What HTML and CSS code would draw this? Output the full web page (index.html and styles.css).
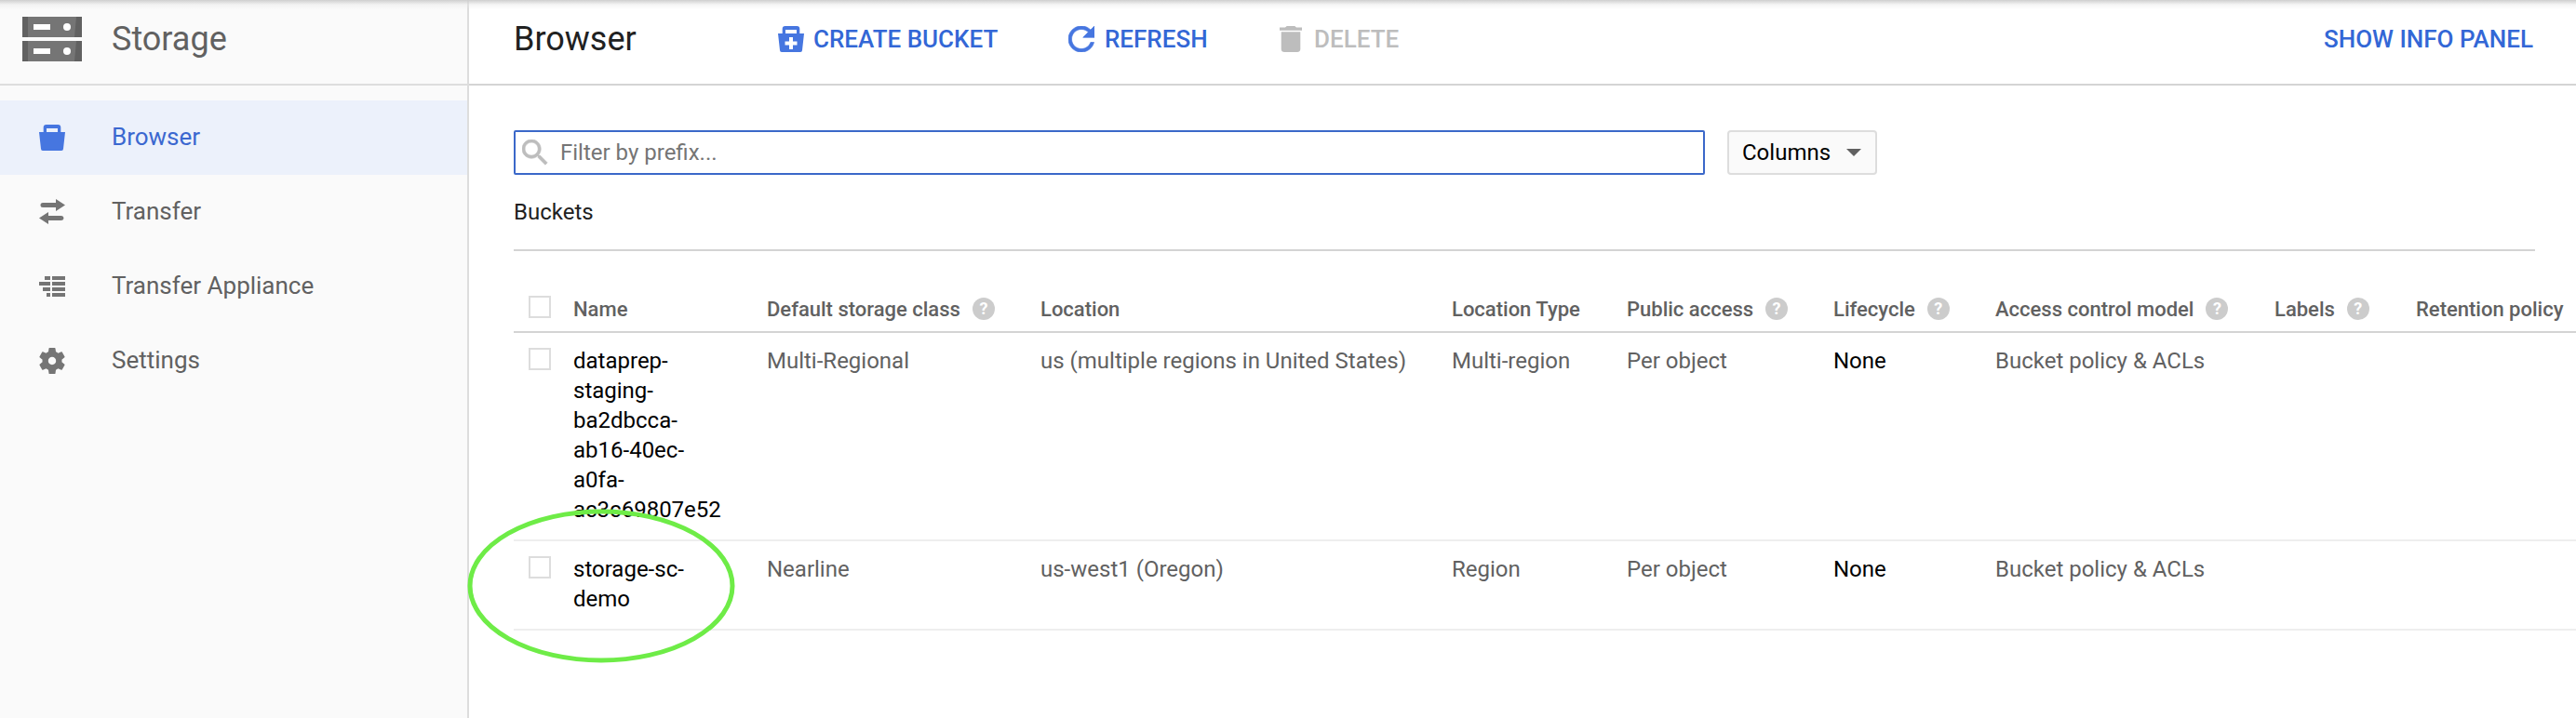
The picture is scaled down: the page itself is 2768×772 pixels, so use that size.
FILE: index.html
```html
<!DOCTYPE html>
<html lang="en">
<head>
<meta charset="utf-8">
<title>Storage Browser</title>
<link rel="stylesheet" href="styles.css">
</head>
<body>
<div class="app">
  <aside class="sidebar">
    <div class="brand">
      <svg class="brand-icon" viewBox="0 0 64 48" width="64" height="48">
        <path class="srv" d="M0 0h64v22H0zM0 26h64v22H0z"/>
        <path class="srv-light" d="M6 0h52l-2 22H6zM6 26h52l-2 22H6z"/>
        <path class="srv-hole" d="M12 8h18v6H12zM12 34h18v6H12z"/>
        <circle class="srv-hole" cx="48" cy="11" r="4"/>
        <circle class="srv-hole" cx="48" cy="37" r="4"/>
      </svg>
      <span class="brand-name">Storage</span>
    </div>
    <nav class="nav">
      <a class="nav-item active">
        <svg class="nav-icon" viewBox="0 0 28 28" width="28" height="28"><path fill-rule="evenodd" d="M4.7 8V3a3 3 0 0 1 3-3h12.6a3 3 0 0 1 3 3v5H28l-2 18a2 2 0 0 1-2 2H4a2 2 0 0 1-2-2L0 8zM8 4v4h12V4z"/></svg>
        <span class="nav-label">Browser</span>
      </a>
      <a class="nav-item">
        <svg class="nav-icon" viewBox="0 0 28 28" width="28" height="28"><path d="M4 4h14V0l10 6.500L18 13V9H4a2.500 2.500 0 0 1 0-5zM24 23H10v4L0 20.500 10 14v4h14a2.500 2.500 0 0 1 0 5z"/></svg>
        <span class="nav-label">Transfer</span>
      </a>
      <a class="nav-item">
        <svg class="nav-icon" viewBox="0 0 28 28" width="28" height="28"><path d="M6 3h6v4H6zM14 3h14v4H14zM0 9h12v4H0zM14 9h14v4H14zM4 15h8v4H4zM14 15h14v4H14zM8 21h4v4H8zM14 21h14v4H14z"/></svg>
        <span class="nav-label">Transfer Appliance</span>
      </a>
      <a class="nav-item">
        <svg class="nav-icon" viewBox="2.400 2 19.200 20" width="28" height="28"><path d="M19.430 12.980c.04-.32.07-.64.07-.98s-.03-.66-.07-.98l2.110-1.650c.19-.15.24-.42.12-.64l-2-3.460c-.12-.22-.39-.3-.61-.22l-2.490 1c-.52-.4-1.080-.73-1.690-.98l-.38-2.650C14.460 2.180 14.250 2 14 2h-4c-.25 0-.46.18-.49.42l-.38 2.650c-.61.25-1.170.59-1.690.98l-2.490-1c-.23-.09-.49 0-.61.22l-2 3.460c-.13.22-.07.49.12.64l2.110 1.650c-.04.32-.07.65-.07.98s.03.66.07.98l-2.110 1.650c-.19.15-.24.42-.12.64l2 3.460c.12.22.39.3.61.22l2.490-1c.52.4 1.080.73 1.690.98l.38 2.650c.03.24.24.42.49.42h4c.25 0 .46-.18.49-.42l.38-2.650c.61-.25 1.170-.59 1.690-.98l2.490 1c.23.09.49 0 .61-.22l2-3.460c.12-.22.07-.49-.12-.64l-2.110-1.650zM12 15c-1.660 0-3-1.340-3-3s1.340-3 3-3 3 1.340 3 3-1.340 3-3 3z"/></svg>
        <span class="nav-label">Settings</span>
      </a>
    </nav>
  </aside>
  <main class="main">
    <header class="toolbar">
      <h1 class="page-title">Browser</h1>
      <div class="actions">
        <a class="action create">
          <svg class="action-icon" viewBox="0 0 28 28" width="28" height="28"><path fill-rule="evenodd" d="M4.700 8V3a3 3 0 0 1 3-3h12.600a3 3 0 0 1 3 3v5H28l-2 18a2 2 0 0 1-2 2H4a2 2 0 0 1-2-2L0 8zM8 4v4h12V4zM12 12v4.500H7.500v4H12V25h4v-4.500h4.500v-4H16V12z"/></svg>
          <span>CREATE BUCKET</span>
        </a>
        <a class="action refresh">
          <svg class="action-icon heavy" viewBox="4 4 16 16" width="28" height="28"><path d="M17.650 6.350C16.200 4.900 14.210 4 12 4c-4.420 0-7.990 3.580-7.990 8s3.570 8 7.990 8c3.730 0 6.840-2.550 7.730-6h-2.080c-.82 2.330-3.040 4-5.650 4-3.310 0-6-2.690-6-6s2.690-6 6-6c1.660 0 3.140.69 4.220 1.780L13 11h7V4l-2.350 2.350z"/></svg>
          <span>REFRESH</span>
        </a>
        <a class="action delete">
          <svg class="action-icon" viewBox="5 3 14 18" width="24" height="28" preserveAspectRatio="none"><path d="M6 19c0 1.100.9 2 2 2h8c1.100 0 2-.9 2-2V7H6v12zM19 4h-3.500l-1-1h-5l-1 1H5v2h14V4z"/></svg>
          <span>DELETE</span>
        </a>
      </div>
      <a class="info-link">SHOW INFO PANEL</a>
    </header>
    <section class="content">
      <div class="filter-row">
        <label class="filter">
          <svg class="search-icon heavy" viewBox="3 3 18 18" width="28" height="28"><path d="M15.500 14h-.79l-.28-.27C15.410 12.590 16 11.110 16 9.500 16 5.910 13.090 3 9.500 3S3 5.910 3 9.500 5.910 16 9.500 16c1.610 0 3.090-.59 4.230-1.570l.27.28v.79l5 4.990L20.490 19l-4.990-5zm-6 0C7.010 14 5 11.990 5 9.500S7.010 5 9.500 5 14 7.010 14 9.500 11.990 14 9.500 14z"/></svg>
          <input class="filter-input" type="text" placeholder="Filter by prefix...">
        </label>
        <button class="columns-btn" type="button">Columns<i class="caret"></i></button>
      </div>
      <h2 class="section-label">Buckets</h2>
      <table class="buckets">
        <colgroup>
          <col class="c-check"><col class="c-name"><col class="c-class"><col class="c-loc"><col class="c-type"><col class="c-access"><col class="c-life"><col class="c-acl"><col class="c-labels"><col class="c-ret">
        </colgroup>
        <thead>
          <tr>
            <th><i class="checkbox"></i></th>
            <th>Name</th>
            <th><span class="th-in">Default storage class<span class="help">?</span></span></th>
            <th>Location</th>
            <th>Location Type</th>
            <th><span class="th-in">Public access<span class="help">?</span></span></th>
            <th><span class="th-in">Lifecycle<span class="help">?</span></span></th>
            <th><span class="th-in">Access control model<span class="help">?</span></span></th>
            <th><span class="th-in">Labels<span class="help">?</span></span></th>
            <th>Retention policy</th>
          </tr>
        </thead>
        <tbody>
          <tr>
            <td><i class="checkbox"></i></td>
            <td class="name"><div class="name-in">dataprep-staging-ba2dbcca-ab16-40ec-a0fa-ac3c69807e52</div></td>
            <td>Multi-Regional</td>
            <td>us (multiple regions in United States)</td>
            <td>Multi-region</td>
            <td>Per object</td>
            <td class="strong">None</td>
            <td>Bucket policy &amp; ACLs</td>
            <td></td>
            <td></td>
          </tr>
          <tr>
            <td><i class="checkbox"></i></td>
            <td class="name"><div class="name-in">storage-sc-demo</div></td>
            <td>Nearline</td>
            <td>us-west1 (Oregon)</td>
            <td>Region</td>
            <td>Per object</td>
            <td class="strong">None</td>
            <td>Bucket policy &amp; ACLs</td>
            <td></td>
            <td></td>
          </tr>
        </tbody>
      </table>
    </section>
  </main>
  <svg class="annotation" viewBox="0 0 290 166" width="290" height="166"><ellipse cx="144" cy="83" rx="141" ry="80"/></svg>
</div>
</body>
</html>
```
FILE: styles.css
```css
* { box-sizing: border-box; }
html, body { margin: 0; height: 100%; }
body {
  font-family: Roboto, "Liberation Sans", sans-serif;
  color: #212121;
  background: #fff;
  overflow: hidden;
}
body::before {
  content: "";
  position: absolute;
  left: 0; right: 0; top: 0;
  height: 10px;
  background: linear-gradient(#cfcfcf, rgba(230,230,230,.4) 50%, rgba(255,255,255,0));
  z-index: 2;
}
.app { position: relative; display: flex; height: 772px; }

/* sidebar */
.sidebar {
  width: 504px;
  flex: none;
  background: #fafafa;
  border-right: 2px solid #ddd;
}
.brand {
  height: 92px;
  display: flex;
  align-items: center;
  padding: 0 0 6px 24px;
  border-bottom: 2px solid #ddd;
}
.brand-icon { display: block; flex: none; }
.srv { fill: #616161; }
.srv-light { fill: #757575; }
.srv-hole { fill: #fff; }
.brand-name { margin-left: 32px; font-size: 36px; color: #616161; line-height: 1; }
.nav { padding-top: 16px; }
.nav-item {
  display: flex;
  align-items: center;
  height: 80px;
  padding-left: 42px;
  font-size: 26px;
  color: #616161;
}
.nav-icon { flex: none; margin-right: 50px; fill: #757575; }
.nav-label { margin-bottom: 2px; }
.nav-item.active { background: #ecf1fb; color: #3b68d0; }
.nav-item.active .nav-icon { fill: #4676e0; }

/* toolbar */
.main { flex: 1; min-width: 0; overflow: hidden; }
.toolbar {
  height: 92px;
  display: flex;
  align-items: center;
  padding: 0 46px 6px 48px;
  border-bottom: 2px solid #d4d4d4;
}
.page-title { margin: 0; width: 284px; font-size: 36px; font-weight: 400; color: #212121; }
.actions { display: flex; align-items: center; }
.action {
  display: flex;
  align-items: center;
  font-size: 26px;
  font-weight: 500;
  color: #3367d6;
}
.action-icon { flex: none; margin-right: 11px; fill: #4676e0; }
.heavy { stroke-width: .4px; }
.create { width: 312px; }
.create .action-icon { margin-right: 10px; }
.refresh { width: 227px; }
.refresh .heavy { stroke: #4676e0; }
.delete { color: #bdbdbd; }
.delete .action-icon { fill: #bdbdbd; margin-right: 13px; }
.info-link { margin-left: auto; font-size: 26px; font-weight: 500; color: #3367d6; }

/* filter */
.content { padding: 48px 0 0 48px; }
.filter-row { display: flex; gap: 24px; }
.filter {
  width: 1280px;
  height: 48px;
  display: flex;
  align-items: center;
  border: 2px solid #3b68c9;
  border-radius: 2px;
  padding-left: 7px;
}
.search-icon { flex: none; fill: #bdbdbd; stroke: #bdbdbd; }
.filter-input {
  flex: 1;
  margin-left: 13px;
  border: 0;
  outline: 0;
  padding: 0;
  background: transparent;
  font: 400 24px Roboto, sans-serif;
  color: #212121;
}
.filter-input::placeholder { color: #757575; opacity: 1; }
.columns-btn {
  width: 161px;
  height: 48px;
  display: flex;
  align-items: center;
  padding: 0 0 0 14px;
  background: #fafafa;
  border: 2px solid #ddd;
  border-radius: 4px;
  font: 400 24px Roboto, sans-serif;
  color: #000;
}
.caret {
  margin-left: 17px;
  border-left: 8px solid transparent;
  border-right: 8px solid transparent;
  border-top: 8px solid #616161;
}
.section-label {
  margin: 0 44px 0 0;
  padding: 22px 0 21px;
  height: 82px;
  font-size: 24px;
  line-height: 36px;
  font-weight: 400;
  color: #212121;
  border-bottom: 2px solid #d4d4d4;
}

/* table */
.buckets {
  margin-top: 30px;
  width: 2216px;
  table-layout: fixed;
  border-collapse: separate;
  border-spacing: 0;
  font-size: 24px;
  color: #616161;
}
.c-check { width: 64px; }
.c-name { width: 208px; }
.c-class { width: 294px; }
.c-loc { width: 442px; }
.c-type { width: 188px; }
.c-access { width: 222px; }
.c-life { width: 174px; }
.c-acl { width: 300px; }
.c-labels { width: 152px; }
.c-ret { width: 172px; }
.buckets th {
  height: 58px;
  padding: 8px 0 0;
  text-align: left;
  font-size: 22px;
  font-weight: 500;
  white-space: nowrap;
  color: #616161;
  border-bottom: 2px solid #d4d4d4;
  vertical-align: middle;
}
.buckets td {
  padding: 14px 0 16px;
  line-height: 32px;
  vertical-align: top;
  border-bottom: 2px solid #eee;
}
.th-in { display: inline-flex; align-items: center; gap: 13px; }
.help {
  width: 24px;
  height: 24px;
  border-radius: 50%;
  background: #ccc;
  color: #fff;
  font-size: 18px;
  font-weight: 700;
  line-height: 24px;
  text-align: center;
}
.checkbox {
  display: block;
  width: 24px;
  height: 24px;
  margin-left: 16px;
  background: #fff;
  border: 2px solid #ddd;
}
th .checkbox { margin-top: -4px; }
td .checkbox { margin-top: 2px; }
.name { color: #000; }
.name-in { width: 166px; }
.strong { color: #000; font-weight: 400; }

/* hand-drawn annotation over the second row */
.annotation {
  position: absolute;
  left: 502px;
  top: 547px;
  fill: none;
  stroke: #6eec47;
  stroke-width: 5;
  pointer-events: none;
}
```
